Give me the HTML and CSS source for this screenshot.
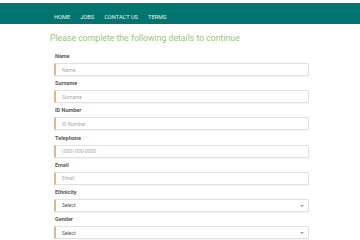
FILE: index.html
```html
<!DOCTYPE html>
<html lang="en">
<head>
    <meta charset="UTF-8">
    <meta name="viewport" content="width=device-width, initial-scale=1.0">
    <title>Complete your details</title>
    <link rel="stylesheet" href="styles.css">
</head>
<body>

<nav class="navbar">
    <ul class="nav-links">
        <li><a href="#">HOME</a></li>
        <li><a href="#">JOBS</a></li>
        <li><a href="#">CONTACT US</a></li>
        <li><a href="#">TERMS</a></li>
    </ul>
</nav>

<main class="container">
    <h1>Please complete the following details to continue</h1>

    <form class="details-form">
        <div class="field">
            <label>Name</label>
            <input type="text" placeholder="Name">
        </div>
        <div class="field">
            <label>Surname</label>
            <input type="text" placeholder="Surname">
        </div>
        <div class="field">
            <label>ID Number</label>
            <input type="text" placeholder="ID Number">
        </div>
        <div class="field">
            <label>Telephone</label>
            <input type="text" placeholder="(000) 000-0000">
        </div>
        <div class="field">
            <label>Email</label>
            <input type="text" placeholder="Email">
        </div>
        <div class="field">
            <label>Ethnicity</label>
            <div class="select">Select</div>
        </div>
        <div class="field">
            <label>Gender</label>
            <div class="select">Select</div>
        </div>
    </form>
</main>

</body>
</html>
```

FILE: styles.css
```css
body {
    margin: 0;
    padding-top: 3px;
    font-family: Roboto, "Liberation Sans", sans-serif;
    background-color: #fff;
    color: #333;
}
.navbar {
    background-color: #00746f;
    height: 21px;
}
.nav-links {
    list-style: none;
    margin: 0;
    padding: 0 0 0 54px;
    display: flex;
    gap: 10px;
    height: 100%;
    align-items: center;
}
.nav-links a {
    color: #e6f3f2;
    text-decoration: none;
    font-size: 5.7px;
}
.container {
    width: 262px;
    margin: 0 auto;
    padding-left: 2px;
}
h1 {
    font-size: 8.7px;
    font-weight: 400;
    color: #9bc57a;
    margin: 9px 0 10px 0;
}
.details-form {
    padding-left: 4px;
}
.field {
    display: flex;
    flex-direction: column;
    gap: 2px;
    margin-bottom: 4.2px;
}
.field label {
    font-size: 5.5px;
    font-weight: 700;
    color: #5a5a5a;
    padding-left: 1px;
    height: 8px;
}
.field input,
.select {
    box-sizing: border-box;
    width: 255px;
    height: 13px;
    border: 1px solid #e2e2e2;
    border-left: 2px solid #d9b98d;
    border-radius: 1px;
    padding: 0 0 0 6px;
    font-family: inherit;
    font-size: 5px;
    color: #999;
    background: #fff;
    box-shadow: 0 1px 1px rgba(0,0,0,0.04);
    margin: 0;
}
.field input::placeholder {
    color: #aaa;
}
.select {
    display: flex;
    align-items: center;
    color: #555;
    position: relative;
}
.select::after {
    content: "";
    position: absolute;
    right: 4px;
    top: 5px;
    border-left: 2px solid transparent;
    border-right: 2px solid transparent;
    border-top: 2px solid #999;
}
```
